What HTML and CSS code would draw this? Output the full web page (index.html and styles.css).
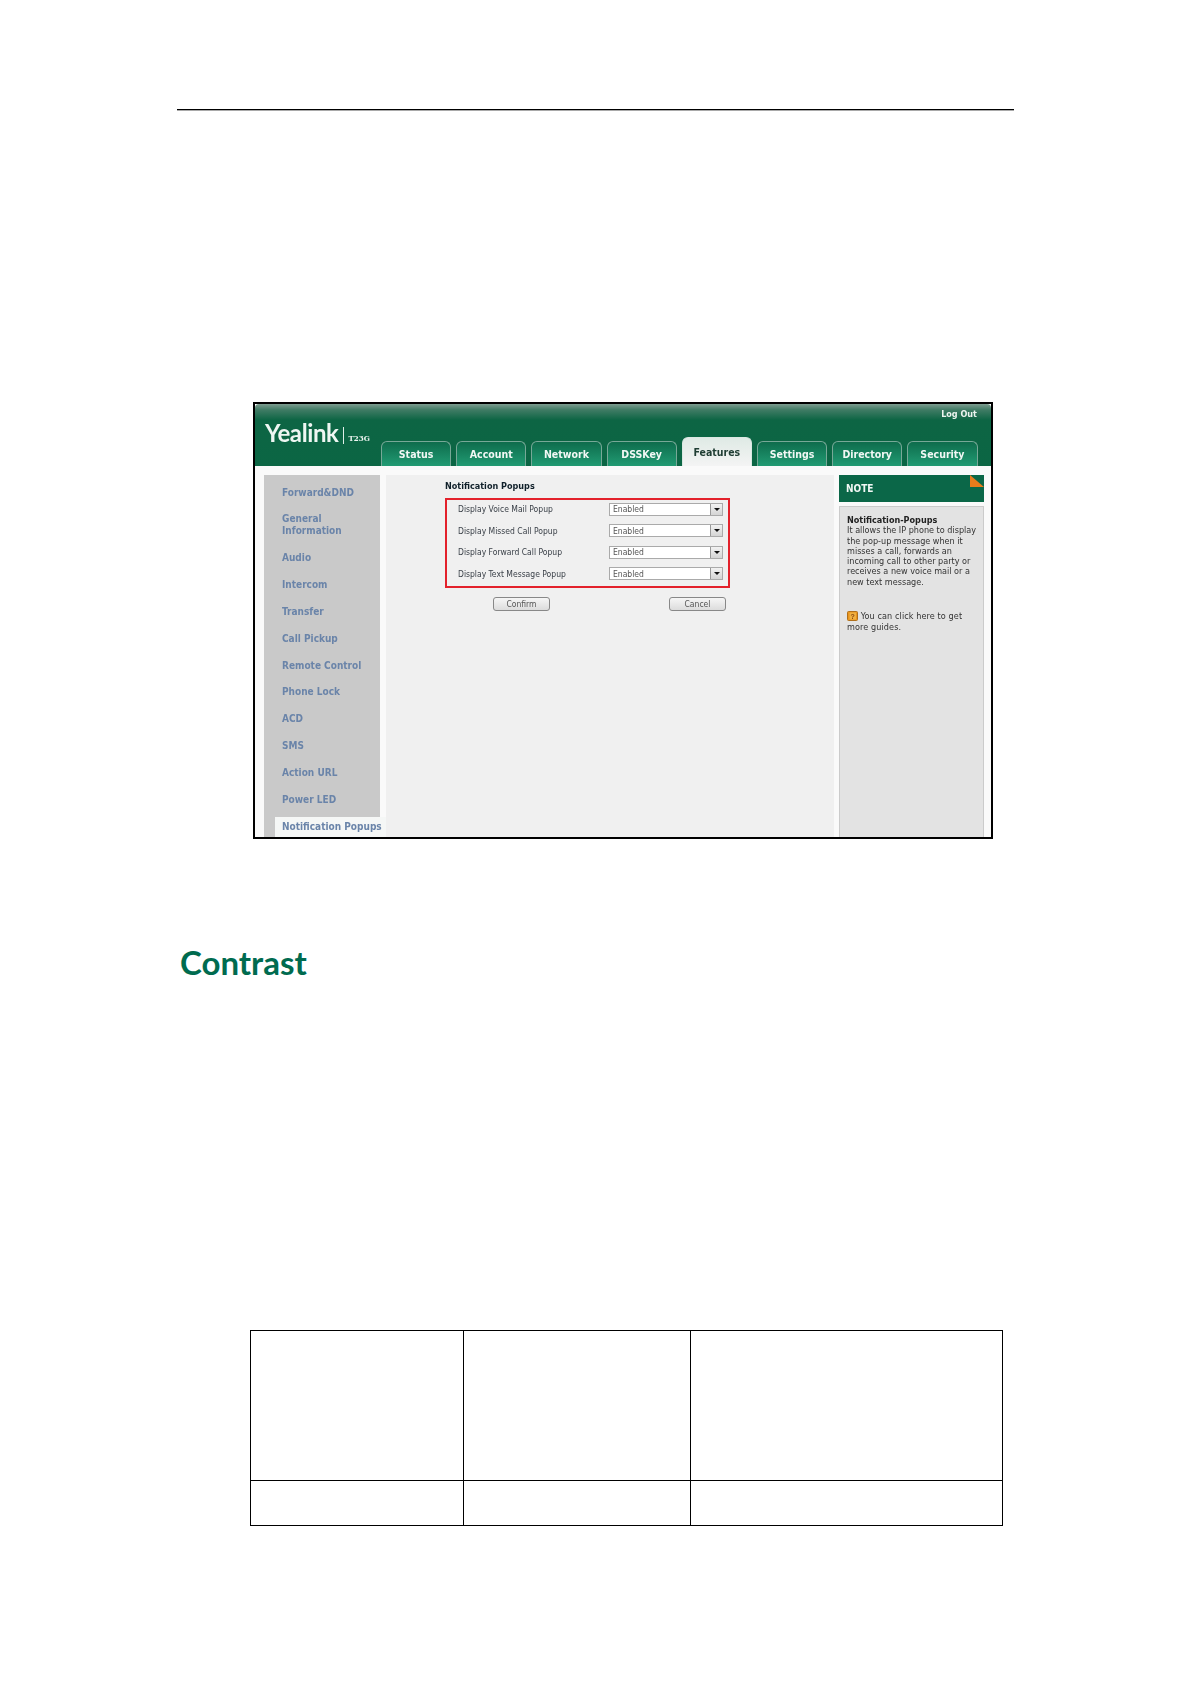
FILE: index.html
```html
<!DOCTYPE html>
<html lang="en">
<head>
<meta charset="utf-8">
<title>Notification Popups</title>
<link rel="stylesheet" href="styles.css">
</head>
<body>
<div class="page">
  <div class="rule"></div>
  <div class="app">
    <header class="app-head">
      <div class="brand">
        <span class="logo">Yealink</span>
        <span class="model">T23G</span>
      </div>
      <div class="head-right">
        <a class="logout">Log Out</a>
        <nav class="tabs">
          <a class="tab">Status</a>
          <a class="tab">Account</a>
          <a class="tab">Network</a>
          <a class="tab">DSSKey</a>
          <a class="tab tab-active">Features</a>
          <a class="tab">Settings</a>
          <a class="tab">Directory</a>
          <a class="tab">Security</a>
        </nav>
      </div>
    </header>
    <div class="app-main">
      <aside class="side">
        <a class="side-item">Forward&amp;DND</a>
        <a class="side-item">General<br>Information</a>
        <a class="side-item">Audio</a>
        <a class="side-item">Intercom</a>
        <a class="side-item">Transfer</a>
        <a class="side-item">Call Pickup</a>
        <a class="side-item">Remote Control</a>
        <a class="side-item">Phone Lock</a>
        <a class="side-item">ACD</a>
        <a class="side-item">SMS</a>
        <a class="side-item">Action URL</a>
        <a class="side-item">Power LED</a>
        <a class="side-item side-active">Notification Popups</a>
      </aside>
      <section class="content">
        <h2 class="form-title">Notification Popups</h2>
        <div class="form-box">
          <div class="form-row"><span class="form-label">Display Voice Mail Popup</span><div class="select"><span class="select-text">Enabled</span><span class="select-arrow"></span></div></div>
          <div class="form-row"><span class="form-label">Display Missed Call Popup</span><div class="select"><span class="select-text">Enabled</span><span class="select-arrow"></span></div></div>
          <div class="form-row"><span class="form-label">Display Forward Call Popup</span><div class="select"><span class="select-text">Enabled</span><span class="select-arrow"></span></div></div>
          <div class="form-row"><span class="form-label">Display Text Message Popup</span><div class="select"><span class="select-text">Enabled</span><span class="select-arrow"></span></div></div>
        </div>
        <div class="actions">
          <button class="btn">Confirm</button>
          <button class="btn">Cancel</button>
        </div>
      </section>
      <aside class="note">
        <div class="note-head">NOTE<span class="note-corner"></span></div>
        <div class="note-body">
          <h3 class="note-title">Notification-Popups</h3>
          <p class="note-text">It allows the IP phone to display<br>the pop-up message when it<br>misses a call, forwards an<br>incoming call to other party or<br>receives a new voice mail or a<br>new text message.</p>
          <p class="note-link"><svg class="note-icon" viewBox="0 0 11 10" aria-hidden="true"><rect x="0.5" y="0.5" width="10" height="9" rx="1" fill="#e8941e" stroke="#b0701a"/><rect x="2.5" y="1.5" width="6.5" height="7" fill="#f0b040"/><text x="5.7" y="7.6" font-size="7" font-family="Liberation Sans, sans-serif" font-weight="700" text-anchor="middle" fill="#8a4a10">?</text></svg> You can click here to get<br>more guides.</p>
        </div>
      </aside>
    </div>
  </div>
  <h1 class="section-title">Contrast</h1>
  <table class="doc-table">
    <colgroup><col class="col-a"><col class="col-b"><col class="col-c"></colgroup>
    <tr class="row-tall"><td></td><td></td><td></td></tr>
    <tr class="row-short"><td></td><td></td><td></td></tr>
  </table>
</div>
</body>
</html>
```
FILE: styles.css
```css
* { box-sizing: border-box; }
html, body { margin: 0; padding: 0; background: #fff; }
.page { width: 1191px; height: 1684px; padding-top: 109px; overflow: hidden; }
.rule { width: 837px; height: 1px; margin-left: 177px; background: #000; box-shadow: 0 0.5px 0 #555; }

.app {
  display: flex; flex-direction: column;
  width: 740px; height: 437px;
  margin: 292px 0 0 253px;
  border: 2px solid #000;
  background: #fff;
  overflow: hidden;
  font-family: "DejaVu Sans", sans-serif;
  font-stretch: condensed;
  filter: blur(0.25px);
}
.app-head {
  display: flex; height: 62px; flex: none;
  background: linear-gradient(#7d9c8f 0, #3f7b64 6px, #0d6544 16px, #0b6644 100%);
  border-radius: 4px 4px 0 0;
}
.brand { width: 126px; flex: none; display: flex; align-items: flex-start; padding: 15px 0 0 10px; }
.logo {
  font-family: Lato, sans-serif; font-stretch: normal; font-weight: 700; font-size: 24px; line-height: 28px;
  color: #eef6f2; letter-spacing: -0.4px;
}
.model {
  margin: 8px 0 0 5px; padding-left: 4px; height: 17px;
  border-left: 1px solid #dfeee8;
  font-family: "DejaVu Serif", serif; font-weight: 700; font-size: 8px; line-height: 22px;
  color: #eef6f2; white-space: nowrap;
}
.head-right { flex: 1; display: flex; flex-direction: column; justify-content: space-between; }
.logout {
  align-self: flex-end; margin: 5px 14px 0 0;
  font-weight: 700; font-size: 9px; line-height: 11px; color: #eef4f0;
}
.tabs { display: flex; align-items: flex-end; gap: 5px; }
.tab {
  display: flex; align-items: center; justify-content: center;
  width: 70.2px; height: 25px;
  border: 1px solid #77a897; border-bottom: 0;
  border-radius: 6px 6px 0 0;
  background: linear-gradient(#0e6c4c, #219b73);
  font-weight: 700; font-size: 10.5px; color: #f2f8f5;
}
.tab-active {
  height: 29px;
  border-color: #dbe8e2;
  background: linear-gradient(#dfeae5, #f4f4f4);
  color: #1f3d33;
}

.app-main { flex: 1; min-height: 0; display: flex; padding-top: 9px; background: #fafafa; }
.side {
  flex: none; width: 116px; margin-left: 9px;
  display: flex; flex-direction: column; gap: 14.85px;
  padding-top: 11.5px;
  background: #c9c9c9;
}
.side-item {
  padding-left: 18px;
  font-weight: 700; font-size: 10px; line-height: 12px; color: #6a84a9; white-space: nowrap;
}
.side-active {
  margin: -4px -6px 0 11px; padding: 4px 0 4px 7px;
  background: #f5f7f6;
}

.content { flex: none; width: 448px; margin-left: 6px; background: #f0f0f0; }
.form-title {
  margin: 5px 0 0 59px;
  font-weight: 700; font-size: 9px; line-height: 12px; color: #10202a;
}
.form-box {
  display: flex; flex-direction: column; gap: 8.6px;
  width: 285px; height: 90px;
  margin: 6px 0 0 59px; padding: 2.5px 5px 0 11px;
  border: 2px solid #e3212b;
}
.form-row { display: flex; justify-content: space-between; align-items: center; height: 13px; }
.form-label { font-size: 8.5px; color: #3a4048; white-space: nowrap; }
.select {
  display: flex; justify-content: space-between; align-items: center;
  width: 114px; height: 13px;
  border: 1px solid #aaa; background: #fff;
}
.select-text { padding-left: 3px; font-size: 8.5px; color: #555; }
.select-arrow {
  position: relative; width: 12px; height: 11px;
  background: linear-gradient(#f2f2f2, #d4d4d4);
  border-left: 1px solid #999;
}
.select-arrow::after {
  content: ""; position: absolute; left: 3px; top: 4px;
  border: 3px solid transparent; border-top: 3px solid #111; border-bottom: 0;
}
.actions { display: flex; gap: 119px; margin: 9px 0 0 107px; }
.btn {
  width: 57px; height: 14px; padding: 0;
  border: 1px solid #888; border-radius: 3px;
  background: linear-gradient(#f6f6f6, #dcdcdc);
  font-family: "DejaVu Sans", sans-serif; font-stretch: condensed; font-size: 8.5px; line-height: 12px; color: #555;
}

.note { flex: none; width: 145px; margin-left: 5px; display: flex; flex-direction: column; }
.note-head {
  position: relative; height: 27px; flex: none; padding-left: 7px;
  background: #0b6748;
  font-weight: 700; font-size: 10px; line-height: 27px; color: #f2f8f5;
}
.note-corner {
  position: absolute; right: 0; top: 0; width: 14px; height: 12px;
  background: #e87c1c;
  clip-path: polygon(0 0, 100% 100%, 0 100%);
}
.note-body {
  flex: 1; margin-top: 4px; padding: 8px 0 0 7px;
  background: #e3e3e3; border: 1px solid #cbcbcb; border-bottom: 0;
  font-size: 9px; line-height: 10.3px; color: #333;
}
.note-title { margin: 0; font-weight: 700; font-size: 9px; line-height: 10.3px; color: #222; }
.note-text { margin: 0; white-space: nowrap; }
.note-link { margin: 24px 0 0; line-height: 11px; white-space: nowrap; letter-spacing: 0.1px; }
.note-icon { width: 11px; height: 10px; vertical-align: -2px; }

.section-title {
  margin: 101px 0 0 180px;
  font-family: Lato, sans-serif; font-weight: 700; font-size: 33px; line-height: 44px; color: #006b4f;
}
.doc-table {
  table-layout: fixed; border-collapse: collapse;
  width: 752px; margin: 346px 0 0 250px;
}
.doc-table td { border: 1px solid #000; padding: 0; }
.col-a { width: 213px; }
.col-b { width: 227px; }
.col-c { width: 312px; }
.row-tall { height: 150px; }
.row-short { height: 45px; }
```
